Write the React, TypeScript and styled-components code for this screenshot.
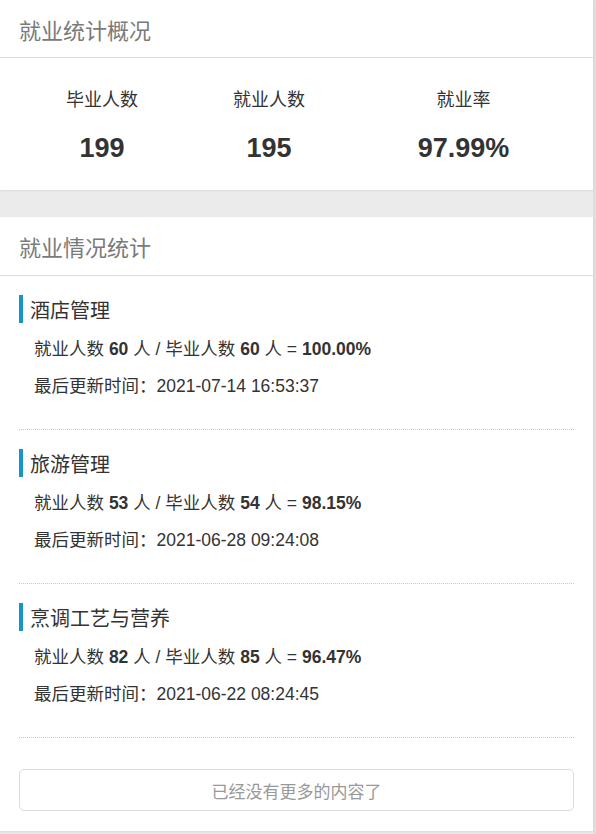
import React from "react";
import styled, { createGlobalStyle } from "styled-components";

const Global = createGlobalStyle`
  html, body {
    margin: 0;
    padding: 0;
    background: #ebebeb;
    font-family: "Liberation Sans", "Noto Sans CJK SC", sans-serif;
    color: #333;
  }
  * { box-sizing: border-box; }
`;

const Page = styled.div`
  width: 596px;
  padding-bottom: 4px;
  display: flex;
  flex-direction: column;
  gap: 27px;
  background: #ebebeb;
  border-right: 3px solid #dedede;
`;

const Card = styled.section`
  background: #fff;
  box-shadow: 0 1px 2px rgba(0, 0, 0, 0.08);
`;

const CardHeader = styled.header<{ $height?: number }>`
  height: ${(p) => p.$height ?? 58}px;
  border-bottom: 1px solid #dcdcdc;
  display: flex;
  align-items: center;
  padding-left: 19px;
  font-size: 22px;
  color: #7a7a7a;
`;

const StatsGrid = styled.div`
  display: grid;
  grid-template-columns: 204px 130px 1fr;
  padding: 28px 0 22px;
`;

const Stat = styled.div`
  display: flex;
  flex-direction: column;
  align-items: center;
  gap: 14px;
`;

const StatLabel = styled.div`
  font-size: 18px;
  line-height: 28px;
  color: #333;
`;

const StatValue = styled.div`
  font-size: 27px;
  line-height: 40px;
  font-weight: bold;
  color: #333;
`;

const List = styled.div`
  padding: 19px 19px 20px;
  display: flex;
  flex-direction: column;
`;

const Item = styled.article`
  padding-bottom: 26px;
  border-bottom: 1px dotted #c8c8c8;
  & + & {
    margin-top: 19px;
  }
`;

const ItemTitle = styled.h3`
  margin: 0;
  height: 28px;
  display: flex;
  align-items: center;
  border-left: 4px solid #1596c8;
  padding-left: 7px;
  font-size: 20px;
  font-weight: normal;
  color: #333;
`;

const ItemLines = styled.div`
  margin-top: 6px;
  padding-left: 15px;
`;

const Line = styled.div`
  height: 37px;
  display: flex;
  align-items: center;
  font-size: 17.5px;
  color: #333;
  white-space: pre;
`;

const Strong = styled.b`
  font-weight: bold;
`;

const MoreButton = styled.button`
  margin-top: 31px;
  height: 42px;
  width: 100%;
  border: 1px solid #dcdcdc;
  border-radius: 5px;
  background: #fff;
  font-family: inherit;
  font-size: 17px;
  color: #999;
  cursor: pointer;
`;

type Major = {
  name: string;
  employed: number;
  graduated: number;
  rate: string;
  updated: string;
};

const majors: Major[] = [
  { name: "酒店管理", employed: 60, graduated: 60, rate: "100.00%", updated: "2021-07-14 16:53:37" },
  { name: "旅游管理", employed: 53, graduated: 54, rate: "98.15%", updated: "2021-06-28 09:24:08" },
  { name: "烹调工艺与营养", employed: 82, graduated: 85, rate: "96.47%", updated: "2021-06-22 08:24:45" },
];

export default function App() {
  return (
    <>
      <Global />
      <Page>
        <Card>
          <CardHeader>就业统计概况</CardHeader>
          <StatsGrid>
            <Stat>
              <StatLabel>毕业人数</StatLabel>
              <StatValue>199</StatValue>
            </Stat>
            <Stat>
              <StatLabel>就业人数</StatLabel>
              <StatValue>195</StatValue>
            </Stat>
            <Stat>
              <StatLabel>就业率</StatLabel>
              <StatValue>97.99%</StatValue>
            </Stat>
          </StatsGrid>
        </Card>
        <Card>
          <CardHeader $height={59}>就业情况统计</CardHeader>
          <List>
            {majors.map((m) => (
              <Item key={m.name}>
                <ItemTitle>{m.name}</ItemTitle>
                <ItemLines>
                  <Line>
                    <span>
                      就业人数 <Strong>{m.employed}</Strong> 人 / 毕业人数 <Strong>{m.graduated}</Strong> 人 = <Strong>{m.rate}</Strong>
                    </span>
                  </Line>
                  <Line>
                    <span>最后更新时间：{m.updated}</span>
                  </Line>
                </ItemLines>
              </Item>
            ))}
            <MoreButton>已经没有更多的内容了</MoreButton>
          </List>
        </Card>
      </Page>
    </>
  );
}
